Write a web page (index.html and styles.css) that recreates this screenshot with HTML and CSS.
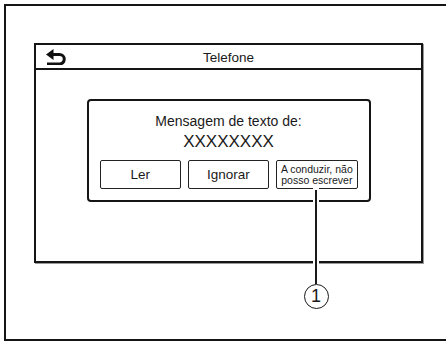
FILE: index.html
```html
<!DOCTYPE html>
<html lang="en">
  <head>
    <meta charset="UTF-8" />
    <meta name="viewport" content="width=device-width, initial-scale=1.0" />
    <title>Telefone</title>
    <link rel="stylesheet" href="styles.css">
  </head>
  <body>
    <div class="page">
      <div class="screen">
        <div class="header">
          <span class="back">
            <svg width="20" height="16" viewBox="0 0 20 16">
              <polygon points="0,5.5 7.5,0 7.5,11" fill="#111" />
              <path d="M6 5.5 H13.5 A4.75 4.75 0 0 1 13.5 15 H1" fill="none" stroke="#111" stroke-width="3" />
            </svg>
          </span>
          <span class="title">Telefone</span>
          <span></span>
        </div>
        <div class="content">
          <div class="dialog">
            <p class="msg">Mensagem de texto de:</p>
            <p class="number">XXXXXXXX</p>
            <div class="btns">
              <button type="button">Ler</button>
              <button type="button">Ignorar</button>
              <button type="button" class="small">A conduzir, não<br />posso escrever</button>
            </div>
          </div>
        </div>
      </div>

      <div class="callout">
        <div class="leader"></div>
        <div class="num">1</div>
      </div>
    </div>
  </body>
</html>
```

FILE: styles.css
```css
body {
  font-family: "Liberation Sans", Arial, sans-serif;
  background: #fff;
  color: #1a1a1a;
  margin: 0;
  overflow: hidden;
}
/* outer frame runs off the right edge, so no right border */
.page {
  position: relative;
  box-sizing: border-box;
  width: 442px;
  height: 337px;
  margin: 4px 0 0 4px;
  padding: 37px 0 0 28px;
  border: 2px solid #151515;
  border-right: none;
}
.screen {
  box-sizing: border-box;
  width: 389px;
  height: 220px;
  border: 2px solid #151515;
  box-shadow: 1px 1px 0 #999;
  display: flex;
  flex-direction: column;
}
.header {
  height: 23px;
  border-bottom: 2px solid #151515;
  display: grid;
  grid-template-columns: 1fr auto 1fr;
  align-items: center;
}
.back {
  padding-left: 10px;
  display: flex;
  align-items: center;
  padding-top: 1px;
}
.title {
  font-size: 13.5px;
  padding-top: 1px;
}
.content {
  flex: 1;
  padding-top: 29px;
}
.dialog {
  box-sizing: border-box;
  width: 284px;
  margin: 0 auto;
  padding: 11px;
  border: 2px solid #151515;
  border-radius: 4px;
  text-align: center;
}
.dialog p {
  margin: 0;
}
.msg {
  font-size: 14px;
  line-height: 19px;
}
.number {
  font-size: 17px;
  line-height: 22px;
}
.btns {
  margin-top: 7px;
  display: grid;
  grid-template-columns: 1fr 1fr 1fr;
  gap: 7px;
}
button {
  box-sizing: border-box;
  height: 29px;
  padding: 0;
  background: #fff;
  color: #1a1a1a;
  border: 1.5px solid #222;
  border-radius: 2px;
  font-family: inherit;
  font-size: 13.5px;
}
button.small {
  font-size: 10.5px;
  line-height: 11px;
}
.callout {
  position: absolute;
  left: 297px;
  top: 184px;
  width: 26px;
  display: flex;
  flex-direction: column;
  align-items: center;
}
.leader {
  width: 1.5px;
  height: 94px;
  background: #1a1a1a;
  box-shadow: 0 0 0 2px #fff;
}
.num {
  box-sizing: border-box;
  width: 25px;
  height: 25px;
  border: 1.5px solid #1a1a1a;
  border-radius: 50%;
  font-size: 18px;
  line-height: 22px;
  text-align: center;
}
```
